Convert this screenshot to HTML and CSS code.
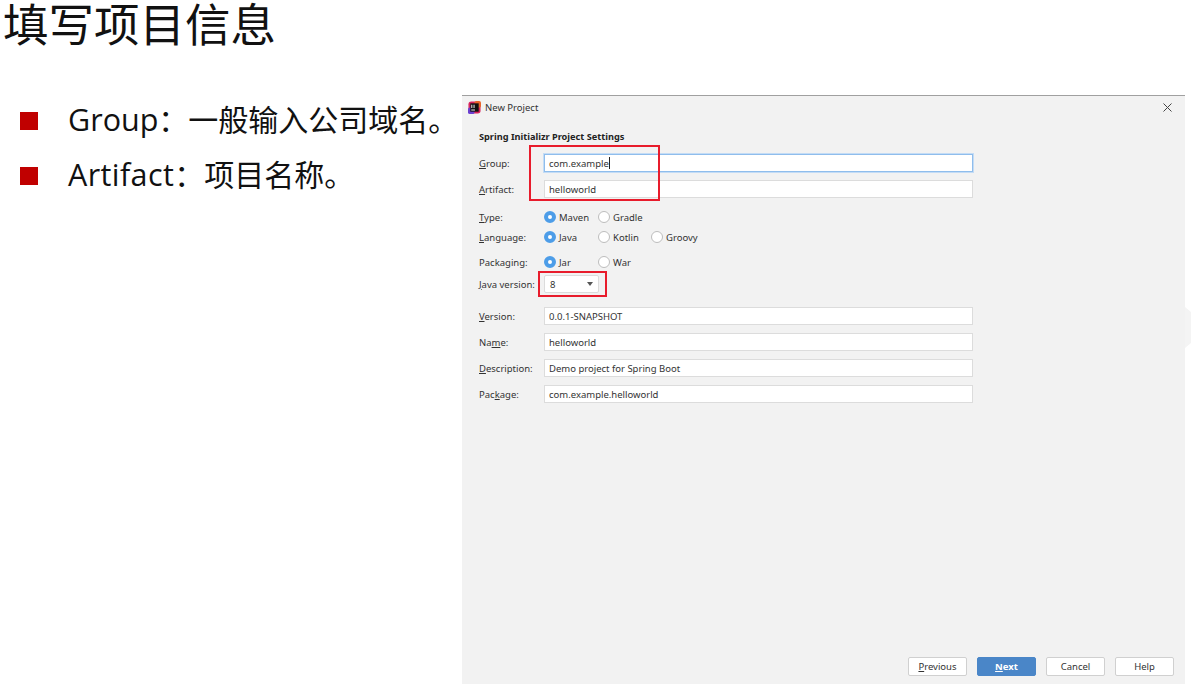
FILE: index.html
```html
<!DOCTYPE html>
<html lang="zh-CN">
<head>
<meta charset="utf-8">
<title>填写项目信息</title>
<link rel="stylesheet" href="styles.css">
</head>
<body>
<div class="slide">
  <section class="left">
    <h1 class="title">填写项目信息</h1>
    <ul class="bullets">
      <li class="bullet"><span class="square"></span><span class="bullet-text"><span class="latin">Group</span>：一般输入公司域名。</span></li>
      <li class="bullet"><span class="square"></span><span class="bullet-text"><span class="latin wide">Artifact</span>：项目名称。</span></li>
    </ul>
  </section>
  <section class="dialog">
    <header class="titlebar">
      <svg class="logo" viewBox="0 0 14 14" width="13" height="13" aria-hidden="true">
        <rect x="0.5" y="0.5" width="13" height="13" rx="3" fill="#d8245c"/>
        <rect x="7" y="0" width="7" height="7" rx="2" fill="#e8652a"/>
        <rect x="0" y="7" width="7" height="7" rx="2" fill="#6b3fd0"/>
        <rect x="2.5" y="2.5" width="9" height="9" fill="#111"/>
        <rect x="3.5" y="9.2" width="4" height="1" fill="#fff"/>
        <rect x="3.6" y="4" width="1" height="3.6" fill="#fff"/>
        <rect x="6" y="4" width="1" height="3.6" fill="#fff"/>
      </svg>
      <span class="win-title">New Project</span>
      <svg class="close" viewBox="0 0 9 9" width="9" height="9" aria-hidden="true"><path d="M.5.5l8 8M8.5.5l-8 8" stroke="#444" stroke-width="1" fill="none"/></svg>
    </header>
    <div class="content">
      <h2 class="heading">Spring Initializr Project Settings</h2>
      <div class="row row-group"><label class="lbl"><u>G</u>roup:</label><div class="field focus">com.example<i class="caret"></i></div></div>
      <div class="row row-next"><label class="lbl"><u>A</u>rtifact:</label><div class="field">helloworld</div></div>
      <div class="row row-type"><label class="lbl"><u>T</u>ype:</label><div class="radios"><span class="radio on">Maven</span><span class="radio">Gradle</span></div></div>
      <div class="row row-lang"><label class="lbl"><u>L</u>anguage:</label><div class="radios"><span class="radio on">Java</span><span class="radio w-b">Kotlin</span><span class="radio">Groovy</span></div></div>
      <div class="row row-pack"><label class="lbl">Packaging:</label><div class="radios"><span class="radio on">Jar</span><span class="radio">War</span></div></div>
      <div class="row row-java"><label class="lbl"><u>J</u>ava version:</label><div class="select"><span>8</span><i class="arrow"></i></div></div>
      <div class="row row-version"><label class="lbl"><u>V</u>ersion:</label><div class="field">0.0.1-SNAPSHOT</div></div>
      <div class="row row-next"><label class="lbl">Na<u>m</u>e:</label><div class="field">helloworld</div></div>
      <div class="row row-next"><label class="lbl"><u>D</u>escription:</label><div class="field">Demo project for Spring Boot</div></div>
      <div class="row row-next"><label class="lbl">Pac<u>k</u>age:</label><div class="field">com.example.helloworld</div></div>
    </div>
    <footer class="buttons">
      <button class="btn"><u>P</u>revious</button>
      <button class="btn primary"><u>N</u>ext</button>
      <button class="btn">Cancel</button>
      <button class="btn">Help</button>
    </footer>
    <div class="mark mark-a"></div>
    <div class="mark mark-b"></div>
  </section>
  <div class="edge"></div>
</div>
</body>
</html>
```
FILE: styles.css
```css
*, *::before, *::after { box-sizing: border-box; }
html, body { margin: 0; padding: 0; background: #fff; }
body { width: 1191px; height: 688px; overflow: hidden; font-family: "Noto Sans CJK SC", sans-serif; }
.slide { display: flex; width: 1191px; height: 688px; position: relative; }
.left { width: 462px; flex: none; }
.title { margin: 0; padding: 0 0 0 3px; font-size: 45.5px; font-weight: 400; line-height: 44px; color: #111; white-space: nowrap; }
.bullets { list-style: none; margin: 0; padding: 49px 0 0 20px; }
.bullet { display: flex; align-items: center; height: 55px; font-size: 30px; color: #111; white-space: nowrap; }
.bullet-text { margin-bottom: 6px; }
.latin { font-family: "Open Sans", "Noto Sans CJK SC", sans-serif; font-size: 30.5px; }
.wide { letter-spacing: 0.4px; }
.square { width: 18px; height: 18px; background: #c00000; margin-right: 30px; flex: none; }
.dialog { width: 723px; height: 589px; margin-top: 95px; flex: none; background: #f2f2f2; border-top: 1px solid #a0a0a0; position: relative; display: flex; flex-direction: column; font-family: "Noto Sans", "Open Sans", sans-serif; font-size: 9.5px; color: #333; }
.titlebar { display: flex; align-items: center; height: 22px; padding: 0 13px 0 6px; flex: none; }
.logo { flex: none; }
.win-title { margin-left: 4px; flex: 1; }
.close { flex: none; }
.content { flex: 1; padding: 0 0 0 17px; }
.heading { margin: 12px 0 0; font-size: 9.2px; line-height: 14px; font-weight: 700; color: #222; }
.row { display: flex; align-items: center; }
.lbl { width: 65px; flex: none; }
.field { width: 429px; height: 18px; background: #fff; border: 1px solid #dcdcdc; padding-left: 4px; display: flex; align-items: center; }
.focus { border: 1px solid #8fbdec; box-shadow: 0 0 0 1px #c4dcf5; }
.caret { width: 1px; height: 12px; background: #222; display: block; }
.row-group { margin-top: 10px; }
.row-type { margin-top: 9px; height: 20px; }
.row-lang { height: 20px; }
.row-pack { margin-top: 5px; height: 20px; }
.row-java { margin-top: 2px; height: 20px; }
.row-version { margin-top: 13px; }
.row-next { margin-top: 8px; }
.radios { display: flex; }
.radio { display: flex; align-items: center; width: 54px; }
.w-b { width: 53px; }
.radio::before { content: ""; width: 12px; height: 12px; border-radius: 50%; background: #fff; border: 1px solid #bdbdbd; margin-right: 3px; flex: none; }
.radio.on::before { border: 4px solid #4d9de8; }
.select { width: 55px; height: 18px; background: #fff; border: 1px solid #dcdcdc; border-radius: 2px; padding: 0 5px 0 5px; display: flex; align-items: center; justify-content: space-between; }
.arrow { width: 0; height: 0; border-left: 3.5px solid transparent; border-right: 3.5px solid transparent; border-top: 4px solid #555; }
.buttons { flex: none; display: flex; justify-content: flex-end; gap: 10px; padding: 0 11px 8px 0; }
.btn { width: 59px; height: 19px; padding: 0; font: inherit; color: #333; background: #fff; border: 1px solid #d0d0d0; border-radius: 2px; }
.primary { background: #4a86c8; border-color: #4a86c8; color: #fff; font-weight: 700; }
.mark { position: absolute; border: 2px solid #e81c2c; }
.mark-a { left: 67px; top: 49px; width: 131px; height: 56px; }
.mark-b { left: 76px; top: 175px; width: 69px; height: 26px; }
.edge { position: absolute; left: 1185px; top: 307px; width: 6px; height: 41px; background: #f4f4f4; clip-path: polygon(0 0, 100% 5px, 100% 36px, 0 100%); }
```
